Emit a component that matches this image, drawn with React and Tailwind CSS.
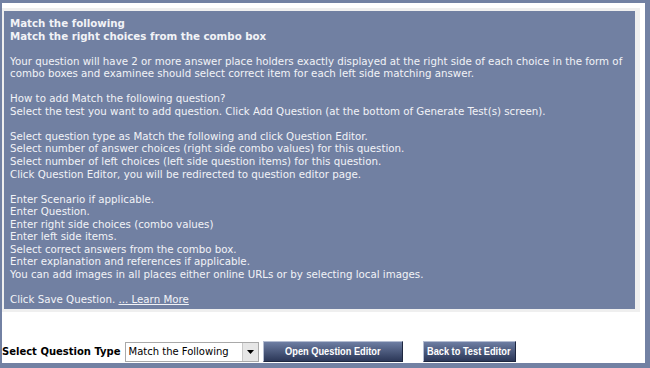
import React from "react";

const verdana = { fontFamily: '"DejaVu Sans", Verdana, sans-serif' };
const arial = { fontFamily: '"Liberation Sans", Arial, sans-serif' };

function NavButton({ width, children }) {
  return (
    <button
      className={`${width} h-[21px] flex items-center justify-center overflow-hidden text-white font-bold text-[11px] bg-gradient-to-b from-[#6e7ea3] to-[#2c3858] border-t border-l border-[#b4bdd2] border-r border-b border-r-[#1e2740] border-b-[#1e2740]`}
      style={arial}
    >
      <span className="inline-block whitespace-nowrap scale-x-[0.84]">{children}</span>
    </button>
  );
}

export default function App() {
  return (
    <div className="w-[650px] h-[368px] overflow-hidden bg-white">
      <div className="h-full box-border border-t-[3px] border-l-[2px] border-r-[5px] border-b-[5px] border-[#7281a3] flex flex-col">
        {/* Info panel */}
        <div className="mt-[5px] mr-[5px] bg-[#efefef] pt-[3px] pl-[2px] pr-[5px] pb-[3px]">
          <div
            className="bg-[#7180a2] text-[#f2f3f7] text-[10.25px] leading-[12.55px] pl-[6px] pt-[6px] h-[298px] box-border"
            style={verdana}
          >
            <div className="font-bold">Match the following</div>
            <div className="font-bold">Match the right choices from the combo box</div>
            <br />
            <div>
              Your question will have 2 or more answer place holders exactly displayed at the right side of each choice in the form of
            </div>
            <div>combo boxes and examinee should select correct item for each left side matching answer.</div>
            <br />
            <div>How to add Match the following question?</div>
            <div>Select the test you want to add question. Click Add Question (at the bottom of Generate Test(s) screen).</div>
            <br />
            <div>Select question type as Match the following and click Question Editor.</div>
            <div>Select number of answer choices (right side combo values) for this question.</div>
            <div>Select number of left choices (left side question items) for this question.</div>
            <div>Click Question Editor, you will be redirected to question editor page.</div>
            <br />
            <div>Enter Scenario if applicable.</div>
            <div>Enter Question.</div>
            <div>Enter right side choices (combo values)</div>
            <div>Enter left side items.</div>
            <div>Select correct answers from the combo box.</div>
            <div>Enter explanation and references if applicable.</div>
            <div>You can add images in all places either online URLs or by selecting local images.</div>
            <br />
            <div>
              Click Save Question. <span className="underline">... Learn More</span>
            </div>
          </div>
        </div>

        {/* Bottom controls */}
        <div className="mt-auto mb-[1px] flex items-center">
          <span className="text-[10px] font-bold text-black mr-[4px] whitespace-nowrap" style={verdana}>
            Select Question Type
          </span>
          <div className="w-[134px] h-[20px] border border-[#a9a9a9] bg-white flex items-center box-border">
            <span className="flex-1 pl-[3px] text-[10px] text-black whitespace-nowrap" style={verdana}>
              Match the Following
            </span>
            <div className="w-[16px] h-full bg-[#e6e6e6] border-l border-[#c8c8c8] flex items-center justify-center">
              <svg width="7" height="4" viewBox="0 0 7 4">
                <path d="M0 0h7L3.5 4z" fill="#000" />
              </svg>
            </div>
          </div>
          <div className="ml-[4px]">
            <NavButton width="w-[140px]">Open Question Editor</NavButton>
          </div>
          <div className="ml-[20px]">
            <NavButton width="w-[93px]">Back to Test Editor</NavButton>
          </div>
        </div>
      </div>
    </div>
  );
}
